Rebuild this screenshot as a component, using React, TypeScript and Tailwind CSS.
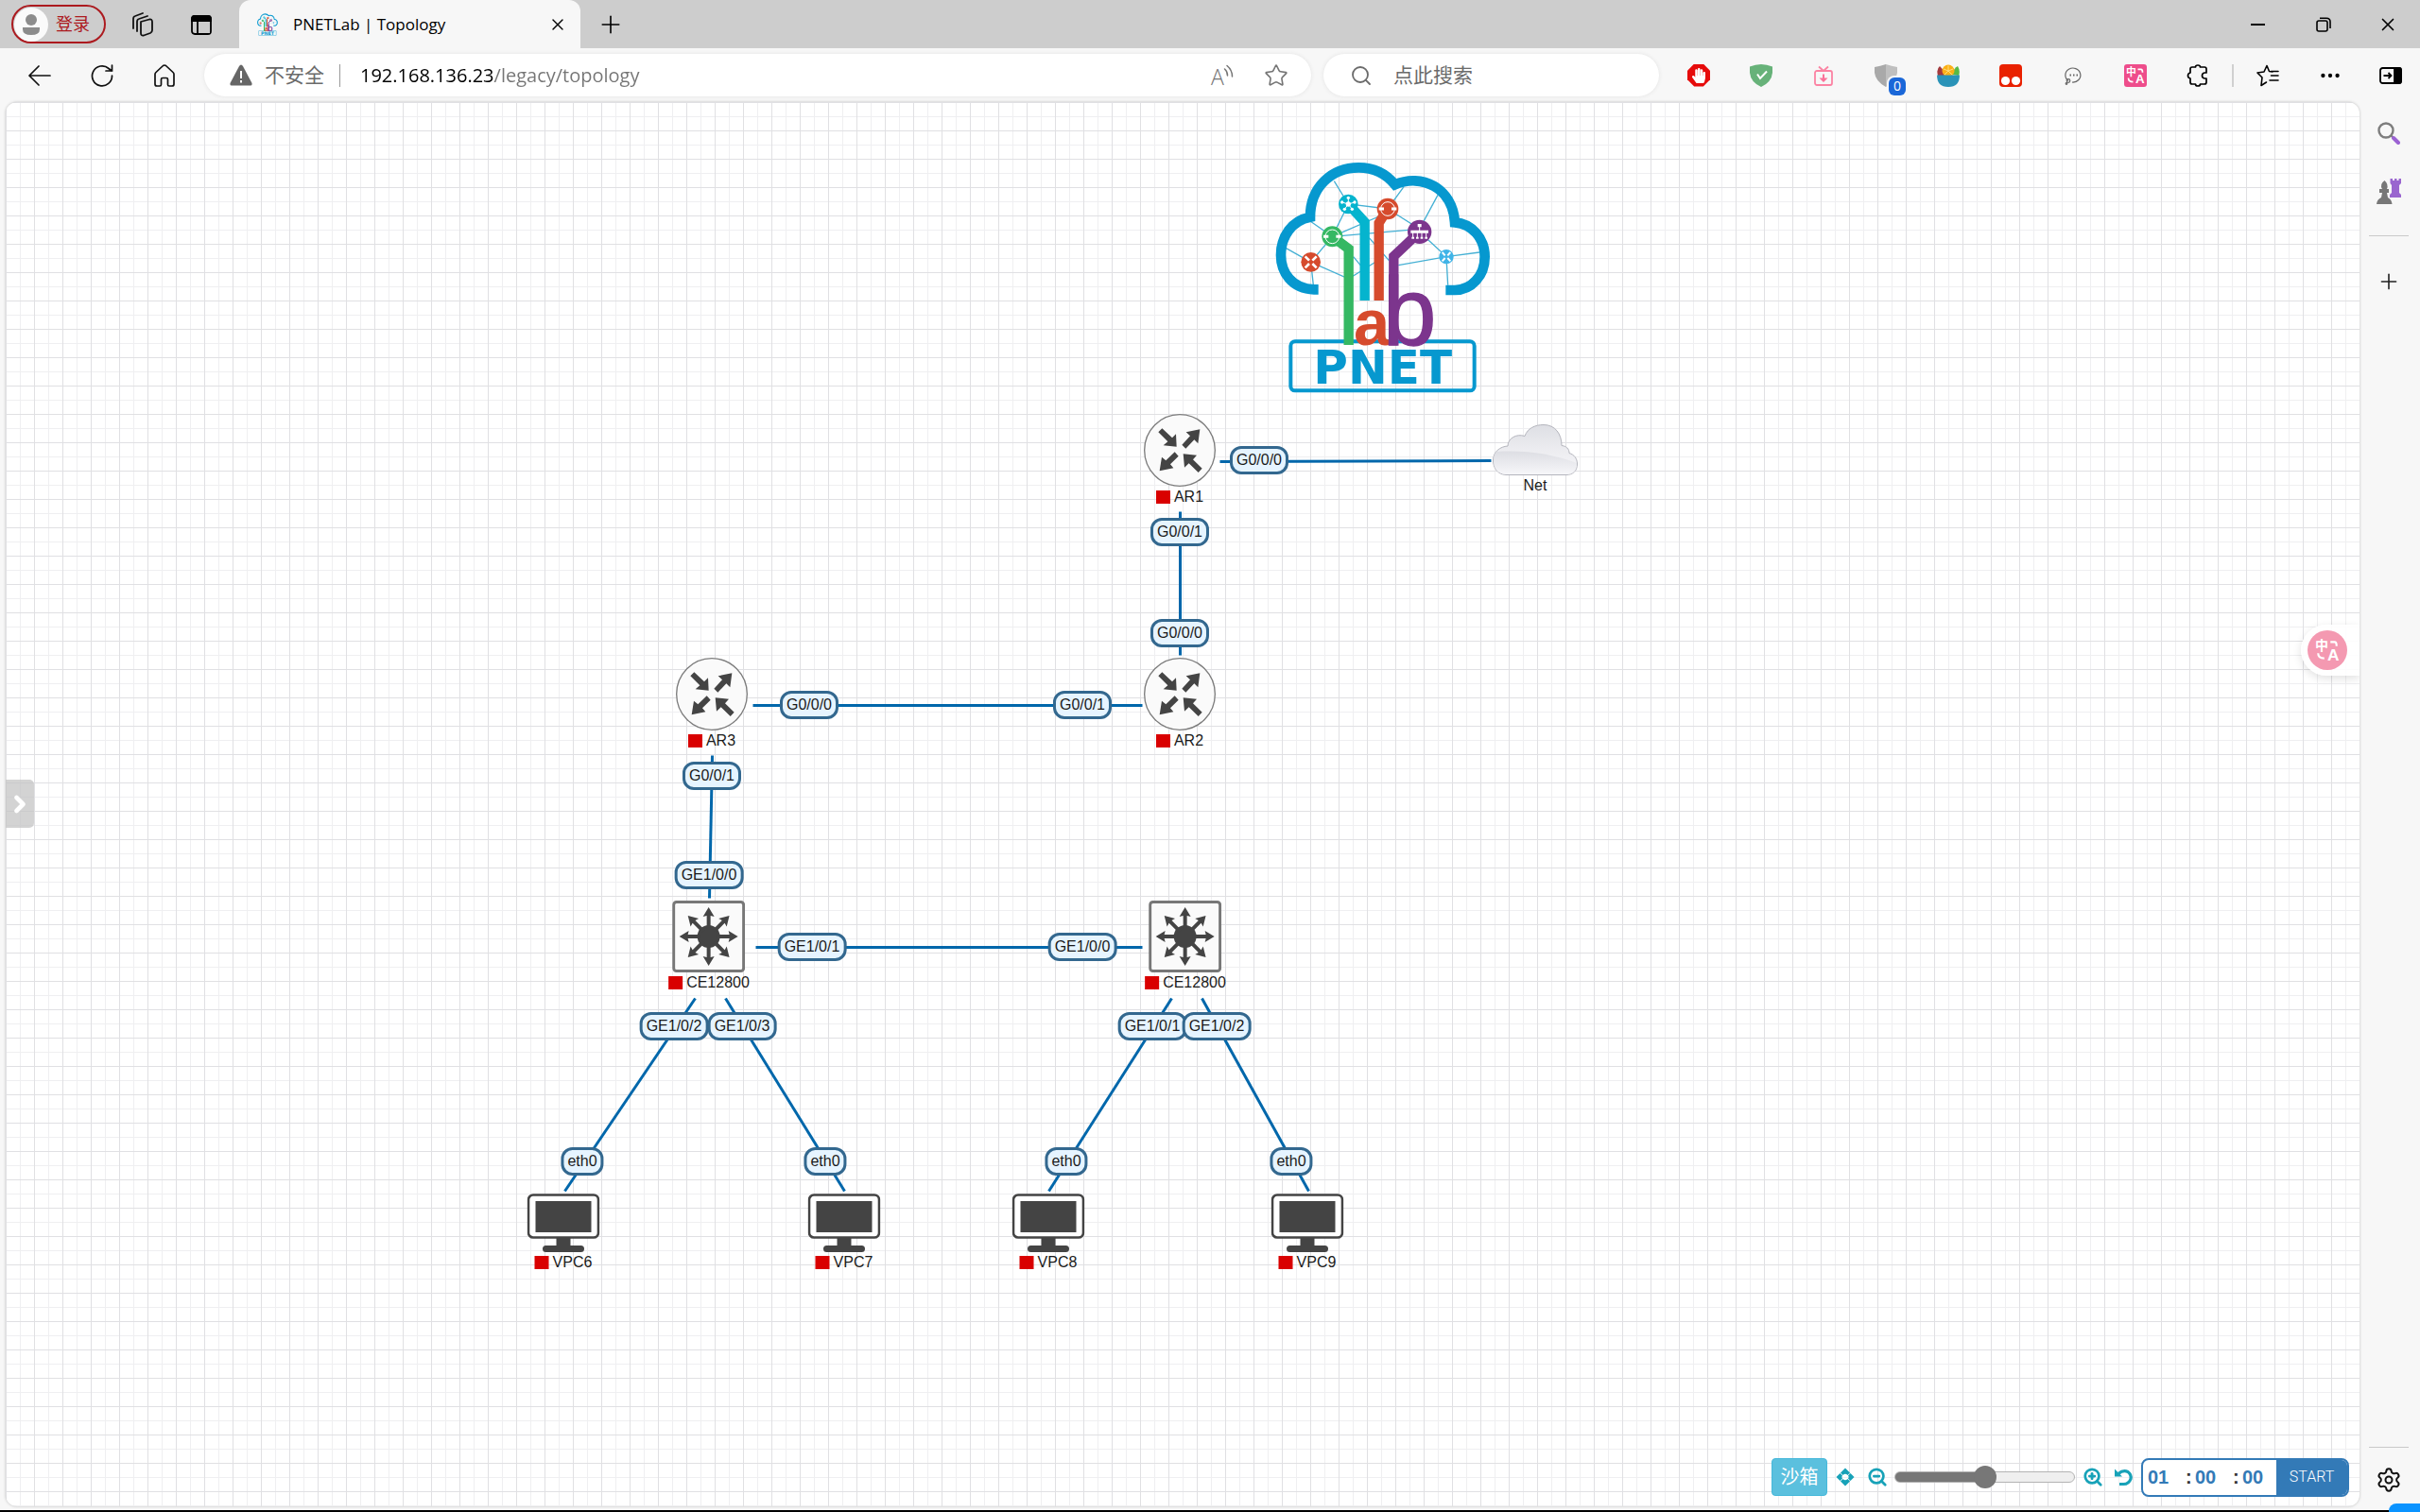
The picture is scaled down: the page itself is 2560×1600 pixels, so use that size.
import { ReactNode } from 'react'
import { FaHandPaper } from 'react-icons/fa'
import { ChevronRight, Ellipsis, House, Plus, Search, Settings, Star, X, ZoomIn, ZoomOut } from 'lucide-react'

type Kind = 'router' | 'switch' | 'pc' | 'cloud'

const nodes: { id: string; name: string; kind: Kind; x: number; y: number }[] = [
  { id: 'ar1', name: 'AR1', kind: 'router', x: 1242, y: 330 },
  { id: 'net', name: 'Net', kind: 'cloud', x: 1618, y: 341 },
  { id: 'ar2', name: 'AR2', kind: 'router', x: 1242, y: 588 },
  { id: 'ar3', name: 'AR3', kind: 'router', x: 747, y: 588 },
  { id: 'ce1', name: 'CE12800', kind: 'switch', x: 744, y: 845 },
  { id: 'ce2', name: 'CE12800', kind: 'switch', x: 1248, y: 845 },
  { id: 'vpc6', name: 'VPC6', kind: 'pc', x: 590, y: 1155 },
  { id: 'vpc7', name: 'VPC7', kind: 'pc', x: 887, y: 1155 },
  { id: 'vpc8', name: 'VPC8', kind: 'pc', x: 1103, y: 1155 },
  { id: 'vpc9', name: 'VPC9', kind: 'pc', x: 1377, y: 1155 },
]

// x1, y1, x2, y2
const links = [
  [1284, 380, 1571, 379],
  [1242, 433, 1242, 585],
  [790, 638, 1202, 638],
  [747, 691, 744, 842],
  [793, 894, 1202, 894],
  [729, 948, 591, 1152],
  [761, 948, 887, 1152],
  [1233, 948, 1103, 1152],
  [1265, 948, 1378, 1152],
]

const ports = [
  { label: 'G0/0/0', x: 1326, y: 379 },
  { label: 'G0/0/1', x: 1242, y: 455 },
  { label: 'G0/0/0', x: 1242, y: 562 },
  { label: 'G0/0/0', x: 850, y: 638 },
  { label: 'G0/0/1', x: 1139, y: 638 },
  { label: 'G0/0/1', x: 747, y: 713 },
  { label: 'GE1/0/0', x: 744, y: 818 },
  { label: 'GE1/0/1', x: 853, y: 894 },
  { label: 'GE1/0/0', x: 1139, y: 894 },
  { label: 'GE1/0/2', x: 707, y: 978 },
  { label: 'GE1/0/3', x: 779, y: 978 },
  { label: 'GE1/0/1', x: 1213, y: 978 },
  { label: 'GE1/0/2', x: 1281, y: 978 },
  { label: 'eth0', x: 610, y: 1121 },
  { label: 'eth0', x: 867, y: 1121 },
  { label: 'eth0', x: 1122, y: 1121 },
  { label: 'eth0', x: 1360, y: 1121 },
]

function Logo({ className, viewBox }: { className: string; viewBox: string }) {
  return (
    <svg className={className} viewBox={viewBox} fill="none" overflow="visible" aria-label="PNET Lab">
      <g stroke="#45b0d4" strokeWidth="4">
        <path d="M244 110L289 183L414 198L465 128M289 183L238 286L168 237M238 286L170 367L90 322M170 367L178 440M170 367L290 420L386 360M238 286L414 210M238 286L515 262M414 198L515 262L573 154M515 271L600 350L705 336M600 350L448 377M600 350L605 440M355 290L418 362M305 350L330 380" />
      </g>
      <path
        d="M194 454H180C110 452 75 400 75 345C75 285 110 235 168 224C168 130 235 67 322 67C370 67 410 88 437 121C520 85 620 130 627 241C680 245 722 290 722 350C722 410 680 457 625 456H598"
        stroke="#0698cf"
        strokeWidth="32"
      />
      <rect x="106" y="619" width="583" height="156" rx="14" stroke="#0698cf" strokeWidth="12" />
      <g strokeWidth="31">
        <path d="M238 286L290 325V630" stroke="#35b863" />
        <path d="M289 183L341 240V489" stroke="#05b4ce" />
        <path d="M414 198L386 243V489" stroke="#d64b2d" />
        <path d="M515 271L433 349V632" stroke="#7c358d" />
      </g>
      <circle cx="289" cy="183" r="31" fill="#05b4ce" />
      <circle cx="414" cy="198" r="34" fill="#d64b2d" />
      <circle cx="238" cy="286" r="33" fill="#35b863" />
      <circle cx="515" cy="271" r="38" fill="#7c358d" />
      <circle cx="170" cy="367" r="31" fill="#d64b2d" />
      <circle cx="600" cy="350" r="23" fill="#3fb4e8" />
      <g stroke="#fff" strokeWidth="3">
        <circle cx="414" cy="198" r="22" />
        <circle cx="238" cy="286" r="22" />
        <path d="M289 183V163M289 183L269 177M289 183L309 177M289 183L277 199M289 183L301 199" />
        <path d="M515 250V270M494 290V270M508 290V270M522 290V270M536 290V270" />
      </g>
      <g stroke="#fff" strokeWidth="9">
        <path d="M386 198H402M426 198H442M210 286H226M250 286H266M487 271H543" />
        <path d="M152 349L165 362M188 349L175 362M152 385L165 372M188 385L175 372" strokeWidth="8" />
        <path d="M587 336L596 346M613 336L604 346M587 364L596 354M613 364L604 354" strokeWidth="6" />
      </g>
      <g fill="#fff">
        <circle cx="289" cy="183" r="8" />
        <circle cx="289" cy="163" r="5" />
        <circle cx="269" cy="177" r="5" />
        <circle cx="309" cy="177" r="5" />
        <circle cx="277" cy="199" r="5" />
        <circle cx="301" cy="199" r="5" />
        <path d="M509 246h12v10h-12zM490 287h8v6h-8zM504 287h8v6h-8zM518 287h8v6h-8zM532 287h8v6h-8z" />
      </g>
      <text className="font-['Liberation_Sans'] font-bold" x="306" y="629" fontSize="206" fill="#d64b2d">
        a
      </text>
      <text
        className="font-['Liberation_Sans']"
        x="398"
        y="629"
        fontSize="306"
        fill="#7c358d"
        stroke="#7c358d"
        strokeWidth="4"
      >
        b
      </text>
      <text
        className="font-['DejaVu_Sans'] font-bold"
        x="398"
        y="753"
        textAnchor="middle"
        fontSize="150"
        fill="#0698cf"
      >
        PNET
      </text>
    </svg>
  )
}

function RouterIcon() {
  return (
    <svg className="h-[77px] w-[76px]" viewBox="0 0 228 231">
      <ellipse cx="114" cy="115.5" rx="112" ry="113.5" fill="#fafafa" stroke="#7d7d7d" strokeWidth="4" />
      <g fill="#444">
        <path d="M46 58L58 46L90 76L102 64L104 104L62 100L76 88Z" />
        <path d="M121 98L133 110L160 82L172 94L178 49L134 58L147 70Z" />
        <path d="M98 121L110 134L84 160L94 172L50 181L57 137L70 148Z" />
        <path d="M125 127L168 131L156 145L185 173L173 186L143 157L129 170Z" />
      </g>
    </svg>
  )
}

function SwitchIcon() {
  return (
    <svg className="h-[76px] w-[77px]" viewBox="0 0 77 76">
      <rect x="1.5" y="1.5" width="74" height="73" rx="3" fill="#fafafa" stroke="#777" strokeWidth="3" />
      <g fill="#444">
        <circle cx="38.5" cy="38" r="12" />
        {[0, 45, 90, 135, 180, 225, 270, 315].map((angle) => (
          <path
            key={angle}
            transform={`rotate(${angle} 38.5 38)`}
            d="M36.500 30V16L32.500 17L38.500 7L44.500 17L40.500 16V30Z"
          />
        ))}
      </g>
    </svg>
  )
}

function PcIcon() {
  return (
    <svg className="h-[62px] w-[77px]" viewBox="0 0 77 62">
      <rect x="1.5" y="1.5" width="74" height="45" rx="5" fill="#fff" stroke="#444" strokeWidth="2.6" />
      <rect x="9" y="8" width="59" height="33" fill="#444" />
      <path d="M31 47H46V55H57A3.500 3.500 0 0 1 57 62H20A3.500 3.500 0 0 1 20 55H31Z" fill="#444" />
    </svg>
  )
}

function CloudIcon() {
  return (
    <svg className="h-[54px] w-[90px]" viewBox="0 0 90 54">
      <defs>
        <linearGradient id="cloud" x1="0" y1="0" x2="0" y2="1">
          <stop offset="0" stopColor="#dedfe4" />
          <stop offset="0.5" stopColor="#ececf0" />
          <stop offset="1" stopColor="#f8f8fa" />
        </linearGradient>
        <linearGradient id="haze" x1="0" y1="0" x2="0" y2="1">
          <stop offset="0" stopColor="#d9dae0" />
          <stop offset="1" stopColor="#f6f6f9" />
        </linearGradient>
      </defs>
      <path
        d="M14 53.5C5 53 .5 46 .5 38C.5 29 8 23.5 16 23C16 15 25 9.500 34 12.500C37 4 45 .5 54 .5C66 .5 73 10 73 22.500C78 23 81 26 81 30.500C86 32 89.500 36 89.500 42C89.500 49 85 53.500 78 53.500Z"
        fill="url(#cloud)"
        stroke="#b4b5bd"
      />
      <path
        d="M14 53C5 52.500 1 46 1 38C1 34 2 31 4 29C34 27 62 31 89 41C89 49 85 53 78 53Z"
        fill="url(#haze)"
        opacity="0.8"
      />
    </svg>
  )
}

const nodeIcons: Record<Kind, ReactNode> = {
  router: <RouterIcon />,
  switch: <SwitchIcon />,
  pc: <PcIcon />,
  cloud: <CloudIcon />,
}

function TranslateGlyph({ className }: { className: string }) {
  return (
    <svg className={className} viewBox="0 0 24 24" fill="none" overflow="visible" stroke="#fff">
      <path d="M15 4H19Q21 4 21 8M3 15Q3 20 9 20" strokeWidth="2" />
      <text x="0" y="12" fontSize="13" fontWeight="700" fill="#fff" stroke="none" className="font-['Noto_Sans_CJK_SC']">
        中
      </text>
      <text x="12" y="22" fontSize="16" fontWeight="700" fill="#fff" stroke="none" className="font-['Liberation_Sans']">
        A
      </text>
    </svg>
  )
}

function IconButton({ label, className = 'w-[66px]', children }: { label: string; className?: string; children: ReactNode }) {
  return (
    <button type="button" aria-label={label} className={`relative flex h-10 shrink-0 items-center justify-center ${className}`}>
      {children}
    </button>
  )
}

function TabBar() {
  return (
    <header className="flex h-[51px] items-center bg-[#cdcdcd]">
      <button
        type="button"
        className="ml-3 flex h-[41px] w-[100px] items-center gap-2 rounded-full border-2 border-[#ac1a1f] pl-px text-[18px] text-[#ac1a1f]"
      >
        <svg className="size-9" viewBox="0 0 36 36">
          <circle cx="18" cy="18" r="18" fill="#fafafa" />
          <circle cx="18" cy="13" r="6" fill="#8c8c8c" />
          <path d="M9 21H27V23Q27 29 18 29Q9 29 9 23Z" fill="#8c8c8c" />
        </svg>
        登录
      </button>
      <IconButton label="Workspaces" className="ml-4 w-[44px]">
        <svg className="size-7" viewBox="0 0 28 28" fill="none" stroke="#111" strokeWidth="1.8" strokeLinejoin="round" strokeLinecap="round">
          <path d="M13 11L22 8.500Q25 8 25 11V20Q25 22 23 23L16 25.500Q13 26 13 23ZM9 21V11Q9 8.500 11 8L20 5M5 18V8Q5 5.500 7 5L15 2" />
        </svg>
      </IconButton>
      <IconButton label="Tab actions" className="ml-4 w-[50px]">
        <svg className="size-6" viewBox="0 0 24 24" fill="none" stroke="#000" strokeWidth="1.8">
          <rect x="2" y="3" width="20" height="19" rx="3" />
          <path d="M2 6Q2 3 5 3H19Q22 3 22 6V8H2ZM8 8V22" fill="#000" />
          <path d="M9 9H21V21H9Z" fill="#cdcdcd" stroke="none" />
        </svg>
      </IconButton>
      <div className="ml-[15px] flex h-full w-[361px] items-center rounded-t-xl bg-[#f7f7f7] pl-[18px] pr-[14px]">
        <Logo className="size-6 shrink-0" viewBox="50 40 700 750" />
        <span className="ml-[15px] flex-1 text-[17px] text-black">PNETLab | Topology</span>
        <button type="button" aria-label="Close tab">
          <X className="size-5" strokeWidth={1.6} />
        </button>
      </div>
      <IconButton label="New tab" className="w-16">
        <Plus className="size-[30px]" strokeWidth={1.3} />
      </IconButton>
      <div className="ml-auto flex">
        <IconButton label="Minimize" className="w-[69px]">
          <span className="h-[2px] w-[15px] bg-black" />
        </IconButton>
        <IconButton label="Restore" className="w-[69px]">
          <svg className="size-4" viewBox="0 0 16 16" fill="none" stroke="#000" strokeWidth="1.6">
            <rect x="1" y="4" width="11" height="11" rx="2" />
            <path d="M4 1.200H11Q15 1.200 15 5V12" />
          </svg>
        </IconButton>
        <IconButton label="Close window" className="w-[68px]">
          <X className="size-[22px]" strokeWidth={1.8} />
        </IconButton>
      </div>
    </header>
  )
}

function Extensions() {
  return (
    <div className="ml-[9px] flex items-center">
      <IconButton label="Adblock">
        <span className="flex size-6 items-center justify-center bg-[#e60b0b] [clip-path:polygon(30%_0,70%_0,100%_30%,100%_70%,70%_100%,30%_100%,0_70%,0_30%)]">
          <FaHandPaper className="size-4 text-white" />
        </span>
      </IconButton>
      <IconButton label="AdGuard">
        <svg className="size-6" viewBox="0 0 24 24" fill="none">
          <path d="M12 0Q18 0 24 2.500V9Q23 19 12 24Q1 19 0 9V2.500Q6 0 12 0Z" fill="#67b279" />
          <path d="M8 10.500L11 15L18 7.500" stroke="#fff" strokeWidth="2" />
        </svg>
      </IconButton>
      <IconButton label="Video downloader">
        <svg className="size-6" viewBox="0 0 24 24" fill="none" stroke="#fb83a3" strokeWidth="1.8">
          <rect x="3" y="7" width="18" height="15" rx="2" />
          <path d="M7 2.500L12 7L17 2.500" />
          <path d="M11 10.500H13V14.500H16.500L12 19L7.500 14.500H11Z" fill="#fb7299" stroke="none" />
        </svg>
      </IconButton>
      <IconButton label="Content blocker, 0 blocked">
        <svg className="size-6" viewBox="0 0 24 24">
          <path d="M12 0V24Q1 18 0 9V3Q6 2 12 0Z" fill="#a9a9a9" />
          <path d="M12 0V24Q23 18 24 9V3Q18 2 12 0Z" fill="#bfbfbf" />
        </svg>
        <span className="absolute left-9 top-[22px] flex h-[19px] w-[18px] items-center justify-center rounded-md bg-[#1a67d8] text-[14px] leading-none text-white ring-2 ring-[#f7f7f7]">
          0
        </span>
      </IconButton>
      <IconButton label="Fruit salad">
        <svg className="size-6" viewBox="0 0 24 24">
          <path d="M1 12Q-1 5 3 2L12 12Z" fill="#a33b3f" />
          <path d="M16 11Q18 4 22 2Q25 7 23 12Z" fill="#57b947" />
          <circle cx="12" cy="7" r="6.500" fill="#fbb017" />
          <path d="M12 7V1.500M12 7L7 5M12 7L17 5M12 7L8 11M12 7L16 11" stroke="#ffdc7c" />
          <path d="M0 11.500H24Q24 24 12 24Q0 24 0 11.500Z" fill="#2a93b8" />
        </svg>
      </IconButton>
      <IconButton label="Tampermonkey">
        <svg className="size-6" viewBox="0 0 24 24">
          <rect width="24" height="24" rx="4" fill="#e92100" />
          <circle cx="6.500" cy="17.500" r="4.600" fill="#fff" />
          <circle cx="17.500" cy="17.500" r="4.600" fill="#fff" />
        </svg>
      </IconButton>
      <IconButton label="Comments">
        <svg className="size-5" viewBox="0 0 20 20" fill="none" stroke="#666" strokeWidth="1.200">
          <path d="M5 15.500A8 7.500 0 1 1 9 17" />
          <circle cx="5" cy="15.500" r="1.800" />
          <circle cx="3" cy="18.500" r=".8" />
          <path d="M6.500 9.500H8M10 9.500H11.500M13.500 9.500H15" strokeWidth="2" />
        </svg>
      </IconButton>
      <IconButton label="Immersive translate">
        <span className="flex size-6 items-center justify-center rounded-[3px] bg-[#ee4d8b]">
          <TranslateGlyph className="size-5" />
        </span>
      </IconButton>
      <IconButton label="Extensions">
        <svg className="size-6" viewBox="0 0 24 24" fill="none" stroke="#000" strokeWidth="1.700" strokeLinejoin="round">
          <path d="M4 5Q4 3 6 3H9.500Q9.500 1 12 1Q14.500 1 14.500 3H19Q21 3 21 5V9H19Q16.500 9.500 16.500 12Q16.500 14.500 19 15H21V19Q21 21 19 21H14.500Q14.500 23 12 23Q9.500 23 9.500 21H6Q4 21 4 19V15Q1.500 14.500 1.500 12Q1.500 9.500 4 9Z" />
        </svg>
      </IconButton>
      <div className="flex w-2 justify-center">
        <div className="h-6 w-[2px] bg-[#d0d0d0]" />
      </div>
      <IconButton label="Favorites">
        <svg className="size-6" viewBox="0 0 24 24" fill="none" stroke="#000" strokeWidth="1.600" strokeLinejoin="round" strokeLinecap="round">
          <path d="M17 8L13.500 7.500L11 1.500L8 8L1 9L6 14L5 22.500L10.500 19M15.500 12H23M15.500 7.500H23M14 17H23" />
        </svg>
      </IconButton>
      <IconButton label="Settings and more">
        <Ellipsis className="size-[26px]" strokeWidth={2} />
      </IconButton>
      <IconButton label="Hide sidebar" className="w-[62px]">
        <svg className="h-[18px] w-6" viewBox="0 0 24 18" fill="none" stroke="#000" strokeWidth="1.800">
          <rect x="1" y="1" width="22" height="16" rx="2.500" />
          <path d="M16 1H21Q23 1 23 3V15Q23 17 21 17H16Z" fill="#000" />
          <path d="M4.500 9H12M9.500 6L12.500 9L9.500 12" />
        </svg>
      </IconButton>
    </div>
  )
}

function Toolbar() {
  return (
    <div className="flex h-[57px] items-center bg-[#f7f7f7] pl-[9px]">
      <IconButton label="Back">
        <svg className="size-6" viewBox="0 0 24 24" fill="none" stroke="#111" strokeWidth="1.700" strokeLinecap="round" strokeLinejoin="round">
          <path d="M23 12H1M11 2L1 12L11 22" />
        </svg>
      </IconButton>
      <IconButton label="Refresh">
        <svg className="size-6" viewBox="0 0 24 24" fill="none" stroke="#111" strokeWidth="1.700" strokeLinecap="round">
          <path d="M22.500 12A10.500 10.500 0 1 1 19 4.500L22 7M22.500 1V7H16" />
        </svg>
      </IconButton>
      <IconButton label="Home">
        <svg className="size-6" viewBox="0 0 24 24" fill="none" stroke="#111" strokeWidth="1.700" strokeLinejoin="round">
          <path d="M2 10.500Q2 9.500 3 8.500L10.500 1.500Q12 .5 13.500 1.500L21 8.500Q22 9.500 22 10.500V21Q22 23 20 23H17Q15.500 23 15.500 21.500V16Q15.500 14.500 14 14.500H10Q8.500 14.500 8.500 16V21.500Q8.500 23 7 23H4Q2 23 2 21Z" />
        </svg>
      </IconButton>
      <div className="ml-[9px] flex h-[45px] flex-1 items-center rounded-full bg-white pl-[27px] pr-[10px] text-[20px] shadow-[0_0_4px_#e2e2e2]">
        <svg className="h-[23px] w-6" viewBox="0 0 24 23">
          <path d="M12 0.500Q13 0.500 14 2L23.500 20Q24 22.500 22 22.500H2Q0 22.500 .5 20L10 2Q11 .5 12 .5Z" fill="#666" />
          <path d="M11 7H13V15H11ZM11 17H13V19.500H11Z" fill="#fff" />
        </svg>
        <span className="ml-[13px] text-[21px] text-[#6b6b6b]">不安全</span>
        <span className="ml-4 h-6 w-px bg-[#9a9a9a]" />
        {/* host in black, path in grey */}
        <input
          type="text"
          aria-label="Address"
          defaultValue="192.168.136.23/legacy/topology"
          className="ml-[21px] h-8 min-w-0 flex-1 bg-[linear-gradient(90deg,#000_142px,#757575_142px)] bg-clip-text text-transparent caret-black outline-none"
        />
        <IconButton label="Read aloud" className="w-[60px]">
          <svg className="h-6 w-6" viewBox="0 0 24 24" fill="none" overflow="visible" stroke="#757575" strokeWidth="1.500" strokeLinecap="round">
            <text x="0" y="22" fontSize="23" fill="#757575" stroke="none" className="font-['Open_Sans'] font-light">
              A
            </text>
            <path d="M14.500 5Q17.500 7.500 17.500 12M17 1.500Q22.500 6 22.500 13" />
          </svg>
        </IconButton>
        <IconButton label="Add to favorites" className="w-[54px]">
          <Star className="size-[26px] text-[#757575]" strokeWidth={1.5} />
        </IconButton>
      </div>
      <div className="ml-[13px] flex h-[45px] w-[355px] items-center rounded-full bg-white pl-7 pr-6 shadow-[0_0_4px_#e2e2e2]">
        <Search className="size-6 shrink-0 text-[#6b6b6b]" strokeWidth={1.8} />
        <input
          type="text"
          aria-label="Search"
          placeholder="点此搜索"
          className="ml-[22px] w-full min-w-0 text-[21px] outline-none placeholder:text-[#6b6b6b]"
        />
      </div>
      <Extensions />
    </div>
  )
}

function Controls() {
  return (
    <div className="absolute bottom-[10px] right-[11px] flex h-[42px] items-center text-[#17a2b8]">
      <button type="button" className="h-10 w-[59px] rounded border border-[#46b8da] bg-[#5bc0de] text-[20px] text-white">
        沙箱
      </button>
      <button type="button" aria-label="Fit to screen" className="ml-[9px]">
        <svg className="size-5" viewBox="0 0 20 20" fill="currentColor">
          <path d="M10 .5L15 5.500L12.500 8Q10 5.500 7.500 8L5 5.500ZM10 19.500L15 14.500L12.500 12Q10 14.500 7.500 12L5 14.500ZM.5 10L4.500 6L7 8.500Q5.500 10 7 11.500L4.500 14ZM19.500 10L15.500 6L13 8.500Q14.500 10 13 11.500L15.500 14Z" />
        </svg>
      </button>
      <button type="button" aria-label="Zoom out" className="ml-[13px]">
        <ZoomOut className="size-[22px]" strokeWidth={3} />
      </button>
      <input
        type="range"
        aria-label="Zoom"
        min={0}
        max={200}
        defaultValue={100}
        className="ml-[7px] h-3 w-[191px] appearance-none rounded-full border border-[#b3b3b3] bg-[linear-gradient(90deg,#777_50%,#efefef_50%)] [&::-webkit-slider-thumb]:size-6 [&::-webkit-slider-thumb]:appearance-none [&::-webkit-slider-thumb]:rounded-full [&::-webkit-slider-thumb]:bg-[#777]"
      />
      <button type="button" aria-label="Zoom in" className="ml-2">
        <ZoomIn className="size-[22px]" strokeWidth={3} />
      </button>
      <button type="button" aria-label="Reset" className="ml-3">
        <svg className="size-5" viewBox="0 0 20 20" fill="none" stroke="currentColor" strokeWidth="3.200">
          <path d="M4 6.500Q9 2 14 4.500Q18 7.500 17 12Q15 17.500 9.500 17.500H5" />
          <path d="M0 1.500V9.500H8Z" fill="currentColor" stroke="none" />
        </svg>
      </button>
      <div className="ml-2 flex h-[41px] w-[220px] items-center overflow-hidden rounded-lg border-2 border-[#337ab7] bg-white pl-[5px] text-[20px] font-bold text-[#337ab7]">
        <input type="text" aria-label="Hours" defaultValue="01" className="w-10 min-w-0 font-['Liberation_Sans'] outline-none" />
        <span className="w-[10px] text-[#333]">:</span>
        <input type="text" aria-label="Minutes" defaultValue="00" className="w-10 min-w-0 font-['Liberation_Sans'] outline-none" />
        <span className="w-[10px] text-[#333]">:</span>
        <input type="text" aria-label="Seconds" defaultValue="00" className="w-9 min-w-0 font-['Liberation_Sans'] outline-none" />
        <button type="button" className="h-full flex-1 bg-[#337ab7] font-[Roboto] text-[16px] font-light text-white">
          START
        </button>
      </div>
    </div>
  )
}

function Topology() {
  return (
    <main className="relative ml-[6px] flex-1 overflow-hidden rounded-xl bg-white bg-[linear-gradient(90deg,#e0e0e3_1px,transparent_1px),linear-gradient(#e0e0e3_1px,transparent_1px),linear-gradient(90deg,#efeff1_1px,transparent_1px),linear-gradient(#efeff1_1px,transparent_1px)] bg-[size:30px_30px,30px_30px,15px_15px,15px_15px] font-['Liberation_Sans','Noto_Sans_CJK_SC',sans-serif] shadow-[0_0_3px_#bbb]">
      <Logo className="absolute left-[1324px] top-[47px] h-[280px] w-[270px]" viewBox="0 0 810 840" />
      <svg className="absolute inset-0 size-full" stroke="#0067ab" strokeWidth="3">
        {links.map(([x1, y1, x2, y2]) => (
          <line key={`${x1}-${y1}`} x1={x1 + 0.5} y1={y1 + 0.5} x2={x2 + 0.5} y2={y2 + 0.5} />
        ))}
      </svg>
      {nodes.map((node) => (
        <div
          key={node.id}
          className="absolute flex -translate-x-1/2 flex-col items-center gap-[2px]"
          style={{ left: node.x, top: node.y }}
        >
          {nodeIcons[node.kind]}
          <div className="flex items-center gap-1 text-[16px] leading-[18px] text-[#1a1a1a]">
            {node.kind !== 'cloud' && <span className="h-[14px] w-[15px] bg-[#d90000]" />}
            {node.name}
          </div>
        </div>
      ))}
      {ports.map((port) => (
        <span
          key={`${port.x}-${port.y}`}
          className="absolute -translate-x-1/2 -translate-y-1/2 rounded-[12px] border-3 border-[#33688f] bg-[#e6f4ff] px-1 text-[16px] leading-6 text-[#1a1a1a]"
          style={{ left: port.x, top: port.y }}
        >
          {port.label}
        </span>
      ))}
      <button
        type="button"
        aria-label="Open menu"
        className="absolute left-0 top-[717px] flex h-[51px] w-[30px] items-center justify-center rounded-r-[5px] bg-[#c4c4c4]/75 text-white"
      >
        <ChevronRight className="size-7" strokeWidth={4} />
      </button>
      <button
        type="button"
        aria-label="Translate page"
        className="absolute right-0 top-[553px] flex h-[54px] w-[62px] items-center rounded-l-full bg-white/90 pl-[7px] shadow-[0_3px_10px_#0000001f]"
      >
        <span className="flex size-[42px] items-center justify-center rounded-full bg-[#f499b1]">
          <TranslateGlyph className="size-[26px]" />
        </span>
      </button>
      <Controls />
    </main>
  )
}

function Sidebar() {
  return (
    <aside className="flex w-16 flex-col items-center pr-[2px]">
      <IconButton label="Search" className="mt-[13px] w-10">
        <svg className="size-6" viewBox="0 0 24 24" fill="none">
          <circle cx="9" cy="9" r="7.500" stroke="#7d7d7d" strokeWidth="2.400" />
          <path d="M14.500 14.500L17 17" stroke="#7d7d7d" strokeWidth="2.400" />
          <path d="M17 17L22 22" stroke="#9b62d3" strokeWidth="4" strokeLinecap="round" />
        </svg>
      </IconButton>
      <IconButton label="Games" className="mt-[21px] w-10">
        <svg className="size-7" viewBox="0 0 28 28">
          <path d="M15.500 1H18V3H20V1H22.500V3H24.500V1H27V6L25 8V16L27 18V21H15V18L17 16V8L15.500 6Z" fill="#9a66cf" />
          <path d="M9.500 3Q14 7 12 12H14V16H12L13 21Q17 23 17.500 28H1Q1.500 23 6 21L7 16H4V12H7Q4 7 9.500 3Z" fill="#777" />
        </svg>
      </IconButton>
      <div className="mt-[27px] h-px w-[42px] bg-[#c9c9c9]" />
      <IconButton label="Customize" className="mt-7 w-10">
        <Plus className="size-[26px] text-[#222]" strokeWidth={1.5} />
      </IconButton>
      <div className="mt-auto h-px w-[42px] bg-[#c9c9c9]" />
      <IconButton label="Settings" className="mb-2 mt-[14px] w-10">
        <Settings className="size-7 text-[#111]" strokeWidth={1.7} />
      </IconButton>
    </aside>
  )
}

export default function App() {
  return (
    <div className="relative flex min-h-screen flex-col overflow-hidden bg-[#f7f7f7] font-['Open_Sans','Noto_Sans_CJK_SC',sans-serif]">
      <TabBar />
      <Toolbar />
      <div className="flex flex-1 pb-1">
        <Topology />
        <Sidebar />
      </div>
      <div className="h-[2px] bg-black" />
      <div className="absolute bottom-0 right-0 h-[9px] w-[33px] rounded-tl-lg bg-[#0a93ff]" />
    </div>
  )
}
